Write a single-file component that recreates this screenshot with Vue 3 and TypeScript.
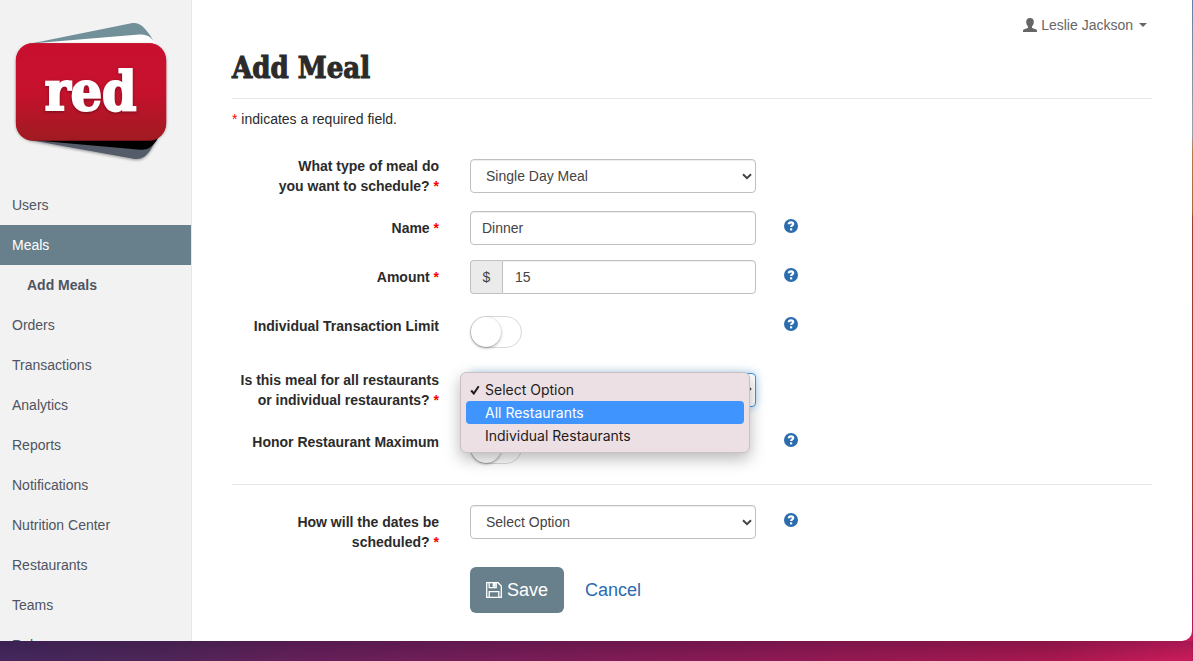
<script setup lang="ts">
import { ref } from 'vue'

interface NavItem {
  label: string
  active?: boolean
  sub?: boolean
}

const navItems: NavItem[] = [
  { label: 'Users' },
  { label: 'Meals', active: true },
  { label: 'Add Meals', sub: true },
  { label: 'Orders' },
  { label: 'Transactions' },
  { label: 'Analytics' },
  { label: 'Reports' },
  { label: 'Notifications' },
  { label: 'Nutrition Center' },
  { label: 'Restaurants' },
  { label: 'Teams' },
  { label: 'Roles' },
]

const scopeOptions = ['Select Option', 'All Restaurants', 'Individual Restaurants']

const mealType = ref('Single Day Meal')
const mealName = ref('Dinner')
const amount = ref('15')
const transactionLimit = ref(false)
const scope = ref(scopeOptions[0])
const highlighted = ref(scopeOptions[1])
const menuOpen = ref(true)
const honorMaximum = ref(false)
const dateSchedule = ref('Select Option')

function choose(option: string) {
  scope.value = option
  menuOpen.value = false
}
</script>

<template>
  <div class="desktop">
    <div class="window">
      <aside class="sidebar">
        <a href="#" class="logo" aria-label="red home">
          <svg viewBox="0 0 192 185" role="img" aria-hidden="true">
            <defs>
              <linearGradient id="card" x1="0" y1="0" x2="0" y2="1">
                <stop offset="0" stop-color="#c8102e" />
                <stop offset="0.5" stop-color="#c6112d" />
                <stop offset="1" stop-color="#9f1b21" />
              </linearGradient>
              <filter id="soft" x="-10%" y="-10%" width="120%" height="130%">
                <feDropShadow dx="0" dy="1" stdDeviation="1.5" flood-color="#000" flood-opacity="0.4" />
              </filter>
            </defs>
            <path d="M30 43.500 L132 23 C139 21.500 144 25 151.500 36 L156 44 Z" fill="#71909a" />
            <path d="M34 43 L140 34.200 C148 33.500 153 37 158 46 Z" fill="#fff" />
            <g filter="url(#soft)">
              <path d="M28 140 L134 159 C142 160.500 147 157 152 149 L158 139 Z" fill="#555b69" />
              <path d="M28 140 L141 150 C150 150.500 154 146 159 138 Z" fill="#000" />
              <rect x="16" y="43" width="151" height="97" rx="17" fill="url(#card)" />
            </g>
            <rect x="16" y="43" width="151" height="98" rx="17" fill="url(#card)" />
            <text x="45" y="110" class="logo-text" filter="url(#soft)">red</text>
          </svg>
        </a>
        <nav>
          <a
            v-for="item in navItems"
            :key="item.label"
            href="#"
            class="nav-link"
            :class="{ active: item.active, sub: item.sub }"
            >{{ item.label }}</a
          >
        </nav>
      </aside>

      <main class="main">
        <header class="topbar">
          <button type="button" class="user">
            <svg class="user-icon" viewBox="0 0 14 14" aria-hidden="true">
              <path
                d="M7 0C4.400 0 3.200 1.500 3.200 4c0 1.800.7 3.300 1.800 4.200v1.200c0 .4-.3.600-.8.800L1.200 11.300C.3 11.700 0 12.200 0 12.900V14h14v-1.100c0-.7-.3-1.200-1.200-1.600L9.800 10.200c-.5-.2-.8-.4-.8-.8V8.200c1.100-.9 1.800-2.400 1.800-4.200C10.800 1.500 9.600 0 7 0z"
              />
            </svg>
            <span>Leslie Jackson</span>
            <span class="caret"></span>
          </button>
        </header>

        <h1>Add Meal</h1>
        <p class="note"><span class="req">*</span> indicates a required field.</p>

        <form @submit.prevent>
          <div class="row">
            <label for="meal-type">What type of meal do<br />you want to schedule? <span class="req">*</span></label>
            <div class="control select lowered">
              <select id="meal-type" v-model="mealType">
                <option>Single Day Meal</option>
              </select>
              <svg class="chevron" viewBox="0 0 10 7"><path d="M1 1.200l4 4 4-4" /></svg>
            </div>
          </div>

          <div class="row">
            <label for="meal-name">Name <span class="req">*</span></label>
            <div class="control"><input id="meal-name" v-model="mealName" type="text" class="field" /></div>
            <button type="button" class="help" aria-label="Help: name">
              <svg viewBox="0 0 14 14"><circle cx="7" cy="7" r="7" /><path d="M4.700 5.300C4.800 3.800 5.700 3.300 7.100 3.300c1.300 0 2.100.6 2.100 1.600 0 1.500-2.100 1.500-2.100 3.200" /><rect x="6" y="9.300" width="2.200" height="2.100" /></svg>
            </button>
          </div>

          <div class="row">
            <label for="amount">Amount <span class="req">*</span></label>
            <div class="control group">
              <span class="addon">$</span>
              <input id="amount" v-model="amount" type="text" class="field" />
            </div>
            <button type="button" class="help" aria-label="Help: amount">
              <svg viewBox="0 0 14 14"><circle cx="7" cy="7" r="7" /><path d="M4.700 5.300C4.800 3.800 5.700 3.300 7.100 3.300c1.300 0 2.100.6 2.100 1.600 0 1.500-2.100 1.500-2.100 3.200" /><rect x="6" y="9.300" width="2.200" height="2.100" /></svg>
            </button>
          </div>

          <div class="row">
            <label for="limit">Individual Transaction Limit</label>
            <div class="control"><input id="limit" v-model="transactionLimit" type="checkbox" class="toggle" /></div>
            <button type="button" class="help" aria-label="Help: transaction limit">
              <svg viewBox="0 0 14 14"><circle cx="7" cy="7" r="7" /><path d="M4.700 5.300C4.800 3.800 5.700 3.300 7.100 3.300c1.300 0 2.100.6 2.100 1.600 0 1.500-2.100 1.500-2.100 3.200" /><rect x="6" y="9.300" width="2.200" height="2.100" /></svg>
            </button>
          </div>

          <div class="row">
            <label for="scope">Is this meal for all restaurants<br />or individual restaurants? <span class="req">*</span></label>
            <div class="control select lowered open">
              <select id="scope" v-model="scope" @mousedown.prevent="menuOpen = !menuOpen">
                <option v-for="option in scopeOptions" :key="option">{{ option }}</option>
              </select>
              <svg class="chevron" viewBox="0 0 10 7"><path d="M1 1.200l4 4 4-4" /></svg>
              <ul v-if="menuOpen" class="menu" role="listbox" aria-label="Restaurants">
                <li
                  v-for="option in scopeOptions"
                  :key="option"
                  role="option"
                  :aria-selected="option === scope"
                  :class="{ highlighted: option === highlighted }"
                  @mouseenter="highlighted = option"
                  @click="choose(option)"
                >
                  <svg v-if="option === scope" class="check" viewBox="0 0 10 10"><path d="M1.200 5.500l2.600 3L8.700 1.200" /></svg>
                  {{ option }}
                </li>
              </ul>
            </div>
          </div>

          <div class="row">
            <label for="honor">Honor Restaurant Maximum</label>
            <div class="control"><input id="honor" v-model="honorMaximum" type="checkbox" class="toggle" /></div>
            <button type="button" class="help" aria-label="Help: restaurant maximum">
              <svg viewBox="0 0 14 14"><circle cx="7" cy="7" r="7" /><path d="M4.700 5.300C4.800 3.800 5.700 3.300 7.100 3.300c1.300 0 2.100.6 2.100 1.600 0 1.500-2.100 1.500-2.100 3.200" /><rect x="6" y="9.300" width="2.200" height="2.100" /></svg>
            </button>
          </div>

          <hr />

          <div class="row">
            <label for="dates">How will the dates be<br />scheduled? <span class="req">*</span></label>
            <div class="control select">
              <select id="dates" v-model="dateSchedule">
                <option>Select Option</option>
              </select>
              <svg class="chevron" viewBox="0 0 10 7"><path d="M1 1.200l4 4 4-4" /></svg>
            </div>
            <button type="button" class="help" aria-label="Help: dates">
              <svg viewBox="0 0 14 14"><circle cx="7" cy="7" r="7" /><path d="M4.700 5.300C4.800 3.800 5.700 3.300 7.100 3.300c1.300 0 2.100.6 2.100 1.600 0 1.500-2.100 1.500-2.100 3.200" /><rect x="6" y="9.300" width="2.200" height="2.100" /></svg>
            </button>
          </div>

          <div class="row">
            <div class="actions">
              <button type="submit" class="save">
                <svg viewBox="0 0 16 16" aria-hidden="true">
                  <path d="M.7.700h11.300l3.300 3.300v11.300H.7zM3.200.700v5h7v-5M7.300 1v3h1.400V1zM3.200 15.300V9.700h9.600v5.600" />
                </svg>
                <span>Save</span>
              </button>
              <a href="#" class="cancel">Cancel</a>
            </div>
          </div>
        </form>
      </main>
    </div>
  </div>
</template>

<style>
body {
  margin: 0;
}
</style>

<style scoped>
* {
  box-sizing: border-box;
}

.desktop {
  height: 100vh;
  padding: 0 1px 20px 0;
  font: 14px/20px "Liberation Sans", Arial, sans-serif;
  color: #2b2b2b;
  background:
    linear-gradient(to bottom, rgba(20, 5, 35, 0.2), rgba(20, 5, 35, 0)) bottom / 100% 20px no-repeat,
    linear-gradient(to bottom, #6b7f9f 0%, #9a9fae 20%, #b57a4a 23%, #a5673b 32%, #a03a30 33%, #a5332f 75%, #a51a50 90%, #c51a5c 100%) right / 1px 100% no-repeat,
    linear-gradient(to right, #45285e 0%, #4e2659 13%, #66205a 26%, #8a1a55 60%, #a8184f 88%, #cc1c5c 100%);
}

.window {
  display: flex;
  height: 100%;
  overflow: hidden;
  background: #fff;
  border-radius: 0 0 10px 0;
}

.sidebar {
  flex: none;
  width: 192px;
  background: #f2f2f2;
  border-right: 1px solid #e6e6e6;
}

.logo {
  display: block;
  height: 185px;
}

.logo svg {
  display: block;
  width: 100%;
  height: 100%;
}

.logo-text {
  font: bold 55px "DejaVu Serif Condensed", "DejaVu Serif", serif;
  fill: #fff;
  stroke: #fff;
  stroke-width: 2;
}

.nav-link {
  display: block;
  padding: 10px 12px;
  color: #4f5461;
  text-decoration: none;
}

.nav-link.active {
  background: #68808b;
  color: #fff;
}

.nav-link.sub {
  padding-left: 27px;
  font-weight: bold;
}

.main {
  flex: 1;
  min-width: 0;
  padding: 0 40px;
}

.topbar {
  display: flex;
  justify-content: flex-end;
  height: 50px;
  padding: 15px 5px;
}

.user {
  display: flex;
  align-items: center;
  gap: 4px;
  padding: 0;
  border: 0;
  background: none;
  font: inherit;
  color: #666;
}

.user-icon {
  width: 14px;
  height: 14px;
  fill: #666;
}

.caret {
  margin-left: 2px;
  border: 4px solid transparent;
  border-top-color: #666;
  border-bottom: 0;
}

h1 {
  margin: 0 0 10px;
  padding-bottom: 12px;
  border-bottom: 1px solid #e7e7e7;
  font: bold 29px/36px "DejaVu Serif Condensed", "DejaVu Serif", serif;
  -webkit-text-stroke: 1px #2b2b2b;
}

.note {
  margin: 0 0 20px;
}

.req {
  color: #f00;
}

.row {
  display: flex;
  align-items: flex-start;
  margin-bottom: 15px;
}

.row label {
  flex: none;
  width: 208px;
  padding-top: 7px;
  padding-right: 1px;
  font-weight: bold;
  text-align: right;
  white-space: nowrap;
}

.control {
  position: relative;
  flex: none;
  width: 286px;
  margin-left: 30px;
}

.lowered {
  margin-top: 10px;
}

.field,
select {
  display: block;
  width: 100%;
  height: 34px;
  padding: 6px 12px;
  border: 1px solid #c0c0c0;
  border-radius: 4px;
  background: #fff;
  box-shadow: inset 0 1px 1px rgba(0, 0, 0, 0.075);
  font: inherit;
  color: #444;
  outline: 0;
}

.field {
  padding-left: 11px;
}

select {
  appearance: none;
  padding: 6px 15px;
}

.chevron {
  position: absolute;
  top: 14px;
  right: 4px;
  width: 10px;
  height: 7px;
  fill: none;
  stroke: #444;
  stroke-width: 2;
  pointer-events: none;
}

.group {
  display: flex;
}

.addon {
  flex: none;
  width: 32px;
  padding: 6px 0;
  border: 1px solid #c0c0c0;
  border-right: 0;
  border-radius: 4px 0 0 4px;
  background: #ebebeb;
  color: #444;
  text-align: center;
}

.group .field {
  flex: 1;
  min-width: 0;
  padding-left: 12px;
  border-radius: 0 4px 4px 0;
}

.toggle {
  display: block;
  appearance: none;
  width: 52px;
  height: 32px;
  margin: 7px 0 0;
  border: 1px solid #d8d8d8;
  border-radius: 16px;
  background: #fff;
}

.toggle::before {
  content: "";
  display: block;
  width: 30px;
  height: 30px;
  border-radius: 50%;
  background: #fff;
  box-shadow: 0 1px 3px rgba(0, 0, 0, 0.4);
}

.toggle:checked {
  background: #68808b;
}

.toggle:checked::before {
  margin-left: 20px;
}

.help {
  margin: 8px 0 0 28px;
  padding: 0;
  border: 0;
  background: none;
}

.help svg {
  display: block;
  width: 14px;
  height: 14px;
}

.help circle {
  fill: #2a6cae;
}

.help path {
  fill: none;
  stroke: #fff;
  stroke-width: 2.2;
}

.help rect {
  fill: #fff;
}

.open select {
  border-color: #3d97e0;
  box-shadow: 0 0 8px rgba(102, 175, 233, 0.6);
}

.menu {
  position: absolute;
  z-index: 1;
  top: -1px;
  left: -10px;
  width: 290px;
  margin: 0;
  padding: 5px 6px;
  border: 1px solid #c9c0c4;
  border-radius: 6px;
  background: #ece0e4;
  box-shadow: 0 6px 16px rgba(0, 0, 0, 0.28);
  list-style: none;
  font: 14px/23px Inter, sans-serif;
  color: #1d1b1c;
}

.menu li {
  position: relative;
  margin: 0 -1px;
  padding-left: 19px;
  border-radius: 4px;
}

.menu .highlighted {
  background: #3f94fd;
  color: #fff;
}

.check {
  position: absolute;
  top: 7px;
  left: 4px;
  width: 10px;
  height: 10px;
  fill: none;
  stroke: #1d1b1c;
  stroke-width: 2;
}

hr {
  margin: 20px 0;
  border: 0;
  border-top: 1px solid #e7e7e7;
}

.actions {
  display: flex;
  align-items: center;
  gap: 21px;
  margin-left: 238px;
  font-size: 18px;
  line-height: 24px;
}

.save {
  display: flex;
  align-items: center;
  gap: 5px;
  padding: 11px 16px;
  border: 0;
  border-radius: 6px;
  background: #68808b;
  color: #fff;
  font: inherit;
}

.save svg {
  width: 16px;
  height: 16px;
  fill: none;
  stroke: #fff;
  stroke-width: 1.3;
}

.cancel {
  color: #2a6cae;
  text-decoration: none;
}
</style>
